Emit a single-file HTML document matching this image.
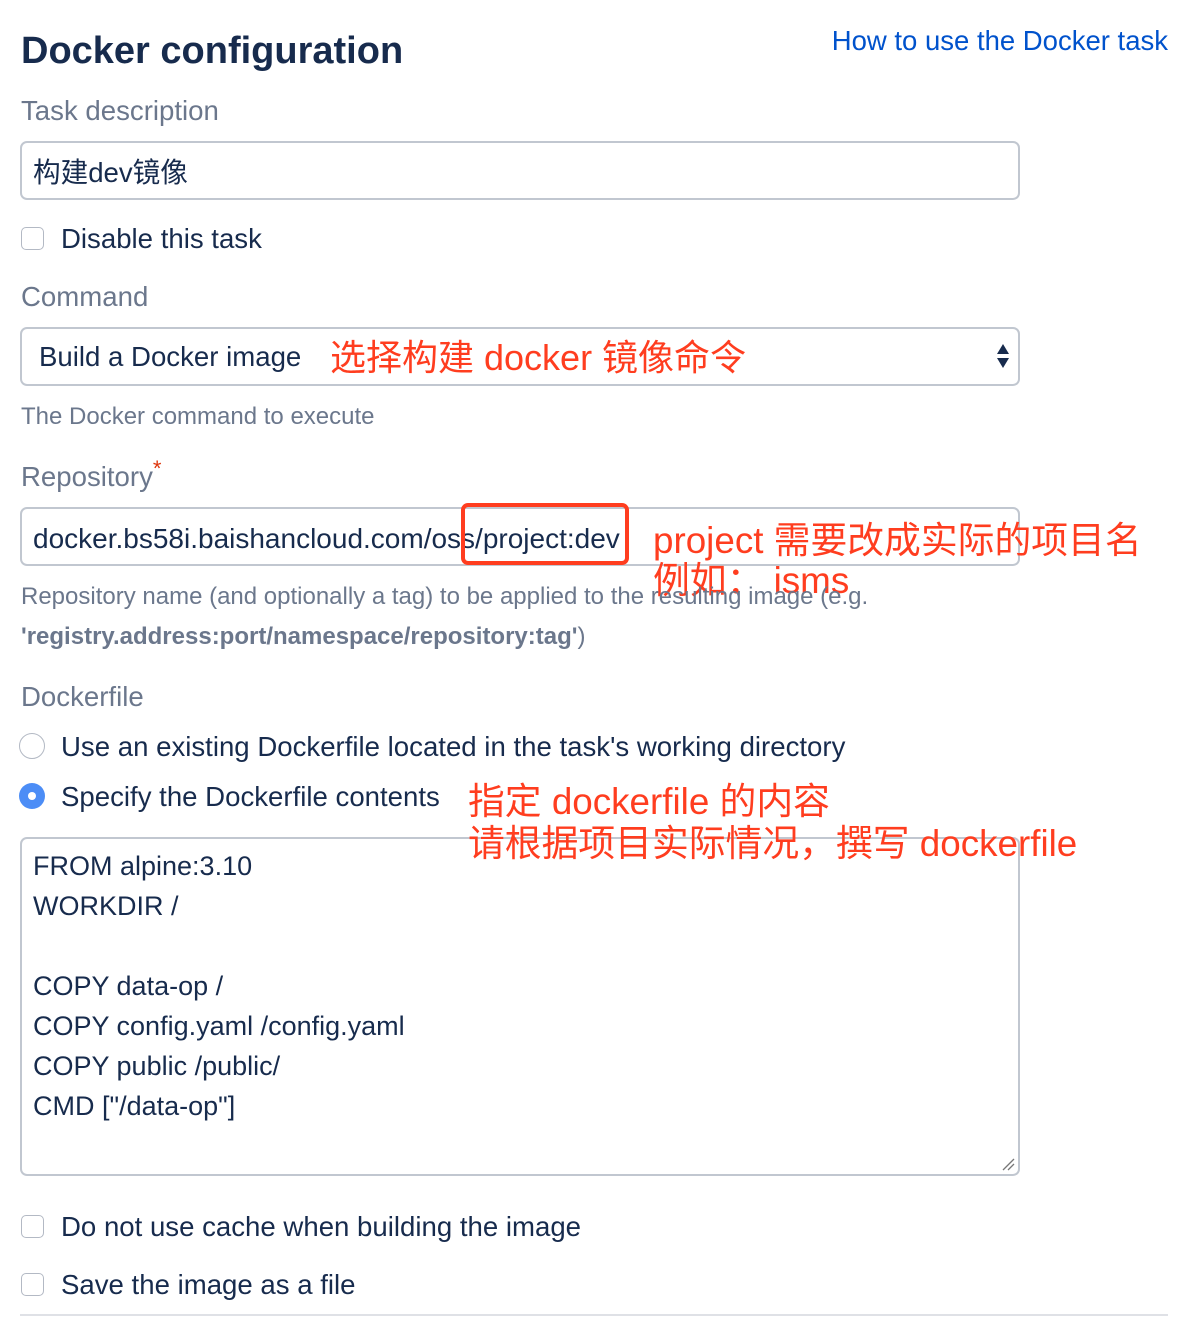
<!DOCTYPE html>
<html><head><meta charset="utf-8"><style>
body{margin:0;width:1196px;height:1328px;background:#fff;position:relative;overflow:hidden;font-family:"Liberation Sans","Noto Sans CJK SC",sans-serif;color:#172b4d}
.t{position:absolute;white-space:nowrap;height:40px;line-height:42px}
.lab{font-size:27.6px;color:#6b778c}
.body{font-size:27.6px;color:#172b4d}
.help{font-size:24px;color:#6b778c}
.red{color:#ff3d1f;font-size:36.8px}
.box{position:absolute;border:2px solid #c1c7d0;border-radius:7px;box-sizing:border-box;background:#fff}
.cb{position:absolute;width:23px;height:23px;border:1.5px solid #b3b9c4;border-radius:5px;box-sizing:border-box}
</style></head><body>
<div class="t" style="left:21px;top:30px;font-size:38px;font-weight:bold;color:#172b4d">Docker configuration</div>
<div class="t" style="right:28px;top:20px;font-size:27.5px;color:#0052cc">How to use the Docker task</div>
<div class="t lab" style="left:21px;top:90px">Task description</div>
<div class="box" style="left:20px;top:141px;width:1000px;height:59px"></div>
<div class="t body" style="left:33px;top:152px">构建dev镜像</div>
<div class="cb" style="left:21px;top:227px"></div>
<div class="t body" style="left:61px;top:218px">Disable this task</div>
<div class="t lab" style="left:21px;top:276px">Command</div>
<div class="box" style="left:20px;top:327px;width:1000px;height:59px"></div>
<div class="t body" style="left:39px;top:336px">Build a Docker image</div>
<div class="t red" style="left:330px;top:337px;font-size:36px">选择构建 docker 镜像命令</div>
<svg style="position:absolute;left:995px;top:342px" width="16" height="28"><path d="M8 2L14 12H2Z M2 16H14L8 26Z" fill="#172b4d"/></svg>
<div class="t help" style="left:21px;top:396px">The Docker command to execute</div>
<div class="t lab" style="left:21px;top:456px">Repository<span style="color:#de350b;font-size:22px;vertical-align:top;line-height:26px">*</span></div>
<div class="box" style="left:20px;top:507px;width:1000px;height:59px"></div>
<div class="t body" style="left:33px;top:518px;font-size:28px">docker.bs58i.baishancloud.com/oss/project:dev</div>
<div style="position:absolute;left:461px;top:503px;width:168px;height:62px;border:4px solid #ff3d1f;border-radius:7px;box-sizing:border-box"></div>
<div class="t red" style="left:653px;top:520px">project 需要改成实际的项目名</div>
<div class="t red" style="left:653px;top:560px">例如： isms</div>
<div class="t help" style="left:21px;top:576px">Repository name (and optionally a tag) to be applied to the resulting image (e.g.</div>
<div class="t help" style="left:21px;top:616px"><b>'registry.address:port/namespace/repository:tag'</b>)</div>
<div class="t lab" style="left:21px;top:676px">Dockerfile</div>
<div style="position:absolute;left:19px;top:733px;width:26px;height:26px;border:1.5px solid #b3b9c4;border-radius:50%;box-sizing:border-box"></div>
<div class="t body" style="left:61px;top:726px">Use an existing Dockerfile located in the task's working directory</div>
<div style="position:absolute;left:19px;top:783px;width:26px;height:26px;border-radius:50%;background:#4c8df6"><div style="position:absolute;left:9px;top:9px;width:8px;height:8px;border-radius:50%;background:#fff"></div></div>
<div class="t body" style="left:61px;top:776px">Specify the Dockerfile contents</div>
<div class="box" style="left:20px;top:837px;width:1000px;height:339px"></div>
<div class="t red" style="left:468px;top:781px">指定 dockerfile 的内容</div>
<div class="t red" style="left:468px;top:823px">请根据项目实际情况，撰写 dockerfile</div>
<div class="t body" style="left:33px;top:846px;line-height:40px;height:auto;font-size:27px">FROM alpine:3.10<br>WORKDIR /<br><br>COPY data-op /<br>COPY config.yaml /config.yaml<br>COPY public /public/<br>CMD ["/data-op"]</div>
<svg style="position:absolute;left:1001px;top:1157px" width="14" height="14"><path d="M2 13L13 2M7 13L13 7" stroke="#777" stroke-width="1.3"/></svg>
<div class="cb" style="left:21px;top:1215px"></div>
<div class="t body" style="left:61px;top:1206px">Do not use cache when building the image</div>
<div class="cb" style="left:21px;top:1273px"></div>
<div class="t body" style="left:61px;top:1264px">Save the image as a file</div>
<div style="position:absolute;left:20px;top:1314px;width:1148px;height:2px;background:#dfe1e6"></div>
</body></html>
